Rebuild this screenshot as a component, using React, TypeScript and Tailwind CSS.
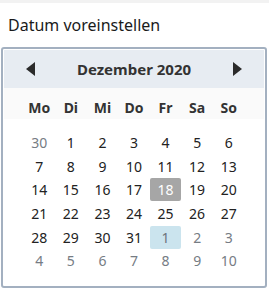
import React from 'react'

const dayNames = ['Mo', 'Di', 'Mi', 'Do', 'Fr', 'Sa', 'So']

// [day, inCurrentMonth]
const weeks: [number, boolean][][] = [
  [[30, false], [1, true], [2, true], [3, true], [4, true], [5, true], [6, true]],
  [[7, true], [8, true], [9, true], [10, true], [11, true], [12, true], [13, true]],
  [[14, true], [15, true], [16, true], [17, true], [18, true], [19, true], [20, true]],
  [[21, true], [22, true], [23, true], [24, true], [25, true], [26, true], [27, true]],
  [[28, true], [29, true], [30, true], [31, true], [1, false], [2, false], [3, false]],
  [[4, false], [5, false], [6, false], [7, false], [8, false], [9, false], [10, false]],
]

const Arrow = ({ dir }: { dir: 'left' | 'right' }) => (
  <svg width="9" height="14" viewBox="0 0 9 14" className="text-[#2b2b2b]">
    {dir === 'left' ? <polygon points="9,0 9,14 0,7" fill="currentColor" /> : <polygon points="0,0 0,14 9,7" fill="currentColor" />}
  </svg>
)

export default function App() {
  return (
    <div className="w-[269px] h-[290px] bg-white overflow-hidden" style={{ fontFamily: '"Noto Sans", sans-serif' }}>
      <div className="h-[3px] bg-[#f2f2f2]" />
      {/* Title */}
      <div className="h-[44px] pl-[8px] pt-[11px] text-[16px] leading-[22px] text-[#1a1a1a]">Datum voreinstellen</div>

      {/* Calendar */}
      <div className="ml-[1px] w-[266px] h-[241px] border-2 border-[#a3b0c0] rounded-[3px] p-[1px]">
        <div className="h-[38px] bg-[#e7ecf2] flex items-center justify-between px-[22px]">
          <Arrow dir="left" />
          <span className="text-[15px] font-bold text-[#333]">Dezember 2020</span>
          <Arrow dir="right" />
        </div>

        <div className="h-[31px] bg-[#fafafa] flex justify-center">
          <div className="w-[221px] grid grid-cols-7 items-end pb-[1px]">
            {dayNames.map((d) => (
              <div key={d} className="text-center text-[14px] font-bold text-[#333] leading-[20px]">{d}</div>
            ))}
          </div>
        </div>

        <div className="flex justify-center pt-[12px]">
          <div className="w-[221px] grid grid-cols-7 auto-rows-[23.6px]">
            {weeks.map((week, wi) =>
              week.map(([day, inMonth], di) => {
                const selected = wi === 2 && di === 4
                const today = wi === 4 && di === 4
                let cls = 'text-[#222]'
                if (!inMonth) cls = 'text-[#767c84]'
                if (selected) cls = 'bg-[#a6a6a6] text-white'
                if (today) cls = 'bg-[#cbe4ee] text-[#6c747d]'
                return (
                  <div key={`${wi}-${di}`} className="flex items-stretch justify-center py-[0.3px]">
                    <div className={`w-full flex items-center justify-center rounded-[2px] text-[14px] ${cls}`}>{day}</div>
                  </div>
                )
              })
            )}
          </div>
        </div>
      </div>
    </div>
  )
}
